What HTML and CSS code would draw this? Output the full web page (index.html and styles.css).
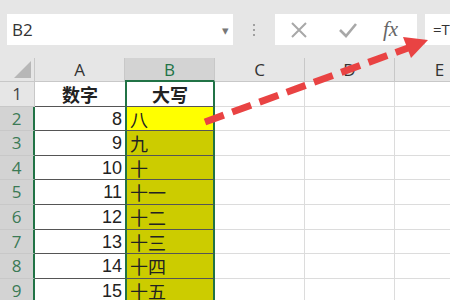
FILE: index.html
```html
<!DOCTYPE html>
<html lang="zh">
<head>
  <meta charset="UTF-8" />
  <title>大写数字</title>
  <link rel="stylesheet" href="styles.css">
</head>
<body>
  <div class="toolbar">
    <div class="namebox">
      <span>B2</span>
      <span class="drop">&#9662;</span>
    </div>
    <div class="grip"><i></i><i></i><i></i></div>
    <div class="fbtns">
      <svg class="btn" width="20" height="20" viewBox="0 0 20 20"><path d="M3 3 L17 17 M17 3 L3 17" stroke="#a8a8a8" stroke-width="2" fill="none"/></svg>
      <svg class="btn" width="22" height="20" viewBox="0 0 22 20"><path d="M3 10 L9 16 L19 4" stroke="#a8a8a8" stroke-width="2.6" fill="none"/></svg>
      <span class="fx">fx</span>
    </div>
    <div class="formula">=T</div>
  </div>

  <div class="sheet">
    <div class="corner"></div>
    <div class="hd">A</div>
    <div class="hd on">B</div>
    <div class="hd">C</div>
    <div class="hd">D</div>
    <div class="hd">E</div>

    <div class="rh">1</div>
    <div class="c a bold mid">数字</div>
    <div class="c b bold mid">大写</div>
    <div class="c"></div><div class="c"></div><div class="c"></div>

    <div class="rh on">2</div>
    <div class="c a num">8</div>
    <div class="c b active">八</div>
    <div class="c"></div><div class="c"></div><div class="c"></div>

    <div class="rh on">3</div>
    <div class="c a num">9</div>
    <div class="c b dim">九</div>
    <div class="c"></div><div class="c"></div><div class="c"></div>

    <div class="rh on">4</div>
    <div class="c a num">10</div>
    <div class="c b dim">十</div>
    <div class="c"></div><div class="c"></div><div class="c"></div>

    <div class="rh on">5</div>
    <div class="c a num">11</div>
    <div class="c b dim">十一</div>
    <div class="c"></div><div class="c"></div><div class="c"></div>

    <div class="rh on">6</div>
    <div class="c a num">12</div>
    <div class="c b dim">十二</div>
    <div class="c"></div><div class="c"></div><div class="c"></div>

    <div class="rh on">7</div>
    <div class="c a num">13</div>
    <div class="c b dim">十三</div>
    <div class="c"></div><div class="c"></div><div class="c"></div>

    <div class="rh on">8</div>
    <div class="c a num">14</div>
    <div class="c b dim">十四</div>
    <div class="c"></div><div class="c"></div><div class="c"></div>

    <div class="rh on">9</div>
    <div class="c a num">15</div>
    <div class="c b dim">十五</div>
    <div class="c"></div><div class="c"></div><div class="c"></div>
  </div>

  <svg class="arrow" width="450" height="300" viewBox="0 0 450 300">
    <line x1="205" y1="122" x2="408" y2="48" stroke="#e94343" stroke-width="7" stroke-dasharray="20 9"/>
    <polygon points="428,40 411,58 403,37" fill="#e94343"/>
  </svg>
</body>
</html>
```

FILE: styles.css
```css
body {
  margin: 0;
  width: 450px;
  height: 300px;
  overflow: hidden;
  position: relative;
  background: #e6e6e6;
  font-family: "Open Sans", "Noto Sans CJK SC", sans-serif;
  color: #222;
}
.toolbar {
  height: 58px;
  box-sizing: border-box;
  padding: 14px 0 0 7px;
  display: flex;
  align-items: flex-start;
  white-space: nowrap;
}
.namebox {
  width: 226px;
  height: 31px;
  flex: none;
  box-sizing: border-box;
  background: #fff;
  display: flex;
  align-items: center;
  justify-content: space-between;
  padding: 0 4px 0 5px;
  font-size: 17px;
  color: #333;
}
.drop {
  color: #777;
  font-size: 13px;
}
.grip {
  width: 42px;
  height: 31px;
  flex: none;
  display: flex;
  flex-direction: column;
  align-items: center;
  justify-content: center;
  gap: 3px;
}
.grip i {
  width: 2px;
  height: 2px;
  background: #a0a0a0;
}
.fbtns {
  width: 142px;
  height: 31px;
  flex: none;
  background: #fff;
  display: flex;
  align-items: center;
  padding-left: 14px;
  box-sizing: border-box;
}
.fbtns .btn {
  margin-right: 28px;
}
.fbtns .btn + .btn {
  margin-right: 24px;
}
.fx {
  font-family: "Liberation Serif", serif;
  font-style: italic;
  font-size: 21px;
  color: #666;
}
.formula {
  margin-left: 8px;
  width: 60px;
  height: 31px;
  flex: none;
  background: #fff;
  padding-left: 8px;
  box-sizing: border-box;
  line-height: 31px;
  font-size: 15px;
  color: #333;
}
.sheet {
  display: grid;
  grid-template-columns: 35px 90px 90px 90px 90px 90px;
  grid-template-rows: 24px repeat(9, 24.6px);
  background: #fff;
}
.sheet > div {
  box-sizing: border-box;
}
.corner {
  background: #e6e6e6;
  border-right: 1px solid #c8c8c8;
  border-bottom: 1px solid #c8c8c8;
  position: relative;
}
.corner::after {
  content: "";
  position: absolute;
  right: 3px;
  bottom: 3px;
  border-left: 17px solid transparent;
  border-bottom: 17px solid #b7b7b7;
}
.hd {
  background: #e6e6e6;
  border-right: 1px solid #c8c8c8;
  border-bottom: 1px solid #c8c8c8;
  text-align: center;
  font-size: 17px;
  line-height: 24px;
  color: #333;
}
.hd.on {
  background: #d3d3d3;
  color: #217346;
  border-bottom: 2px solid #217346;
}
.rh {
  background: #e6e6e6;
  border-right: 1px solid #c8c8c8;
  border-bottom: 1px solid #c8c8c8;
  text-align: center;
  font-size: 17px;
  line-height: 24px;
  color: #444;
}
.rh.on {
  background: #d3d3d3;
  color: #3b7a55;
  border-right: 2px solid #217346;
}
.c {
  border-right: 1px solid #dcdcdc;
  border-bottom: 1px solid #dcdcdc;
  font-size: 17px;
  line-height: 24px;
  padding: 0 3px;
  overflow: hidden;
}
.c.a {
  border-right: none;
  border-bottom: 1px solid #555;
}
.c.b {
  border-left: 2px solid #217346;
  border-right: 2px solid #217346;
  border-bottom: 1px solid #555;
}
.num {
  text-align: right;
  font-family: "Liberation Sans", sans-serif;
  font-size: 18px;
  color: #222;
}
.mid {
  text-align: center;
}
.bold {
  font-weight: bold;
  font-family: "Noto Sans CJK SC", sans-serif;
  font-size: 18px;
}
.active {
  background: #ffff00;
}
.dim {
  background: #cccc00;
}
.b {
  font-family: "Noto Sans CJK SC", sans-serif;
  font-size: 18px;
}
.arrow {
  position: absolute;
  left: 0;
  top: 0;
  pointer-events: none;
}
```
